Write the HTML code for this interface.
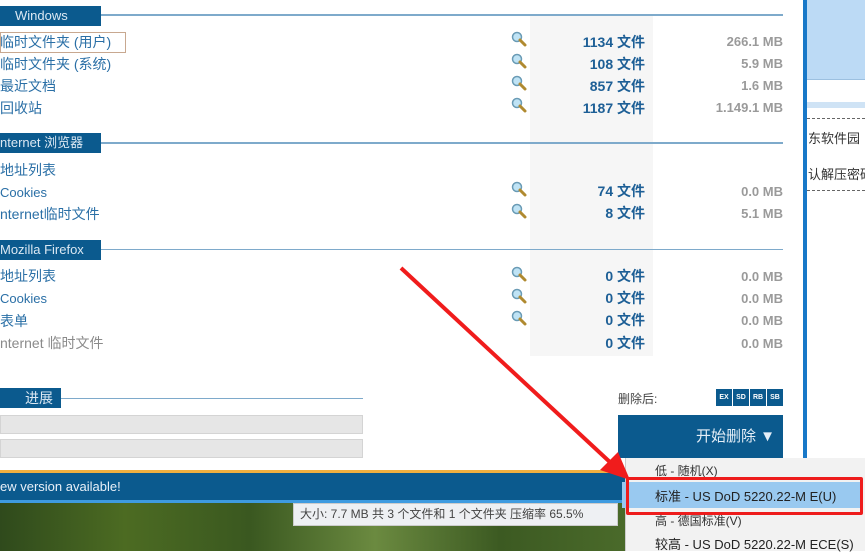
<!DOCTYPE html>
<html><head><meta charset="utf-8"><style>
*{margin:0;padding:0;box-sizing:border-box}
body{width:865px;height:551px;overflow:hidden;background:#fff;position:relative;font-family:"Liberation Sans","Noto Sans CJK SC",sans-serif}
.a{position:absolute;white-space:nowrap}
.hdr{position:absolute;background:#0b5a8e;color:#dbe8f3;font-size:13px;height:20px;line-height:20px}
.ln{position:absolute;height:2px;background:#7eaacb}
.lbl{position:absolute;left:0;font-size:14px;color:#2a6fa6;line-height:18px}
.cnt{position:absolute;right:220px;font-size:14px;font-weight:bold;color:#1d5f96;line-height:18px}
.sz{position:absolute;right:82px;font-size:13px;font-weight:bold;color:#9a9a9a;line-height:18px}
</style></head><body>
<div class="a" style="left:530px;top:16px;width:123px;height:340px;background:#f6f6f6"></div>

<div class="hdr" style="left:0;top:6px;width:101px;padding-left:15px">Windows</div>
<div class="ln" style="left:101px;top:14px;width:682px"></div>
<div class="hdr" style="left:0;top:133px;width:101px">nternet 浏览器</div>
<div class="ln" style="left:101px;top:142px;width:682px"></div>
<div class="hdr" style="left:0;top:240px;width:101px">Mozilla Firefox</div>
<div class="ln" style="left:101px;top:249px;width:682px;height:1px"></div>

<div class="a" style="left:0;top:32px;width:126px;height:21px;border:1px solid #c8a890"></div>
<div class="lbl" style="top:33px">临时文件夹 (用户)</div>
<div class="lbl" style="top:55px">临时文件夹 (系统)</div>
<div class="lbl" style="top:77px">最近文档</div>
<div class="lbl" style="top:99px">回收站</div>
<div class="lbl" style="top:161px">地址列表</div>
<div class="lbl" style="top:184px;font-size:13px">Cookies</div>
<div class="lbl" style="top:205px">nternet临时文件</div>
<div class="lbl" style="top:267px">地址列表</div>
<div class="lbl" style="top:290px;font-size:13px">Cookies</div>
<div class="lbl" style="top:312px">表单</div>
<div class="lbl" style="top:334px;color:#8a8a8a">nternet 临时文件</div>

<svg class="a" style="left:0;top:0" width="865" height="551">
<defs><g id="m"><circle cx="6" cy="6" r="4.5" fill="#bfe3f5" stroke="#6a9bb5" stroke-width="1.5"/><line x1="9" y1="9" x2="14" y2="14" stroke="#b08a30" stroke-width="3" stroke-linecap="round"/></g></defs>
<use href="#m" x="511" y="31"/><use href="#m" x="511" y="53"/><use href="#m" x="511" y="75"/><use href="#m" x="511" y="97"/>
<use href="#m" x="511" y="181"/><use href="#m" x="511" y="203"/>
<use href="#m" x="511" y="266"/><use href="#m" x="511" y="288"/><use href="#m" x="511" y="310"/>
</svg>

<div class="cnt" style="top:33px">1134 文件</div>
<div class="cnt" style="top:55px">108 文件</div>
<div class="cnt" style="top:77px">857 文件</div>
<div class="cnt" style="top:99px">1187 文件</div>
<div class="cnt" style="top:182px">74 文件</div>
<div class="cnt" style="top:204px">8 文件</div>
<div class="cnt" style="top:267px">0 文件</div>
<div class="cnt" style="top:289px">0 文件</div>
<div class="cnt" style="top:311px">0 文件</div>
<div class="cnt" style="top:334px">0 文件</div>
<div class="sz" style="top:33px">266.1 MB</div>
<div class="sz" style="top:55px">5.9 MB</div>
<div class="sz" style="top:77px">1.6 MB</div>
<div class="sz" style="top:99px">1.149.1 MB</div>
<div class="sz" style="top:183px">0.0 MB</div>
<div class="sz" style="top:205px">5.1 MB</div>
<div class="sz" style="top:268px">0.0 MB</div>
<div class="sz" style="top:290px">0.0 MB</div>
<div class="sz" style="top:312px">0.0 MB</div>
<div class="sz" style="top:335px">0.0 MB</div>

<div class="a" style="left:803px;top:0;width:4px;height:470px;background:#1878c8"></div>
<div class="a" style="left:807px;top:0;width:58px;height:80px;background:#bcdaf5;border-bottom:1px solid #9cc0e0"></div>
<div class="a" style="left:807px;top:102px;width:58px;height:6px;background:#cfe3f5"></div>
<div class="a" style="left:807px;top:118px;width:58px;border-top:1px dashed #666"></div>
<div class="a" style="left:808px;top:128px;font-size:13px;color:#333">东软件园</div>
<div class="a" style="left:808px;top:164px;font-size:13px;color:#333">认解压密码</div>
<div class="a" style="left:807px;top:190px;width:58px;border-top:1px dashed #666"></div>

<div class="hdr" style="left:0;top:388px;width:61px;padding-left:25px;font-size:14px">进展</div>
<div class="ln" style="left:61px;top:398px;width:302px;height:1px"></div>
<div class="a" style="left:0;top:415px;width:363px;height:19px;background:#e6e6e6;border:1px solid #d4d4d4"></div>
<div class="a" style="left:0;top:439px;width:363px;height:19px;background:#e6e6e6;border:1px solid #d4d4d4"></div>
<div class="a" style="left:618px;top:390px;font-size:12px;color:#444">删除后:</div>
<div class="a" style="left:716px;top:389px;display:flex;gap:1px">
<span style="width:16px;height:17px;background:#0b5a8e;color:#fff;font-size:7px;font-weight:bold;line-height:17px;text-align:center">EX</span>
<span style="width:16px;height:17px;background:#0b5a8e;color:#fff;font-size:7px;font-weight:bold;line-height:17px;text-align:center">SD</span>
<span style="width:16px;height:17px;background:#0b5a8e;color:#fff;font-size:7px;font-weight:bold;line-height:17px;text-align:center">RB</span>
<span style="width:16px;height:17px;background:#0b5a8e;color:#fff;font-size:7px;font-weight:bold;line-height:17px;text-align:center">SB</span></div>
<div class="a" style="left:618px;top:415px;width:165px;height:43px;background:#0b5a8e;color:#e4eef7;font-size:15px;line-height:43px;text-align:right;padding-right:8px">开始删除 ▼</div>

<div class="a" style="left:0;top:470px;width:625px;height:3px;background:#f0b040"></div>
<div class="a" style="left:0;top:473px;width:625px;height:30px;background:#0b5a8e;border-bottom:3px solid #3e9be0;color:#e8f0f8;font-size:13px;line-height:28px">ew version available!</div>
<div class="a" style="left:0;top:503px;width:625px;height:48px;background:linear-gradient(90deg,#2f4a1c,#4c6b22 20%,#3a5820 40%,#6b8a40 60%,#3c5a22 80%,#4a6a2a)"></div>
<div class="a" style="left:293px;top:503px;width:325px;height:23px;background:#eef0f3;border:1px solid #ccc;font-size:12px;color:#444;line-height:20px;padding-left:6px">大小: 7.7 MB 共 3 个文件和 1 个文件夹 压缩率 65.5%</div>

<div class="a" style="left:625px;top:458px;width:240px;height:93px;background:#f2f2f2;border-left:1px solid #ccc"></div>
<div class="a" style="left:655px;top:462px;font-size:12px;color:#333">低 - 随机(X)</div>
<div class="a" style="left:622px;top:482px;width:238px;height:26px;background:#99c9f0"></div>
<div class="a" style="left:655px;top:486px;font-size:13px;color:#222">标准 - US DoD 5220.22-M E(U)</div>
<div class="a" style="left:626px;top:477px;width:237px;height:38px;border:3px solid #ee1c1c;border-radius:2px"></div>
<div class="a" style="left:655px;top:512px;font-size:12px;color:#333">高 - 德国标准(V)</div>
<div class="a" style="left:655px;top:534px;font-size:13px;color:#222">较高 - US DoD 5220.22-M ECE(S)</div>

<svg class="a" style="left:0;top:0" width="865" height="551">
<line x1="401" y1="268" x2="612" y2="464" stroke="#f01c1c" stroke-width="4"/>
<polygon points="630,480 600,470 618,452" fill="#f01c1c"/>
</svg>
</body></html>
